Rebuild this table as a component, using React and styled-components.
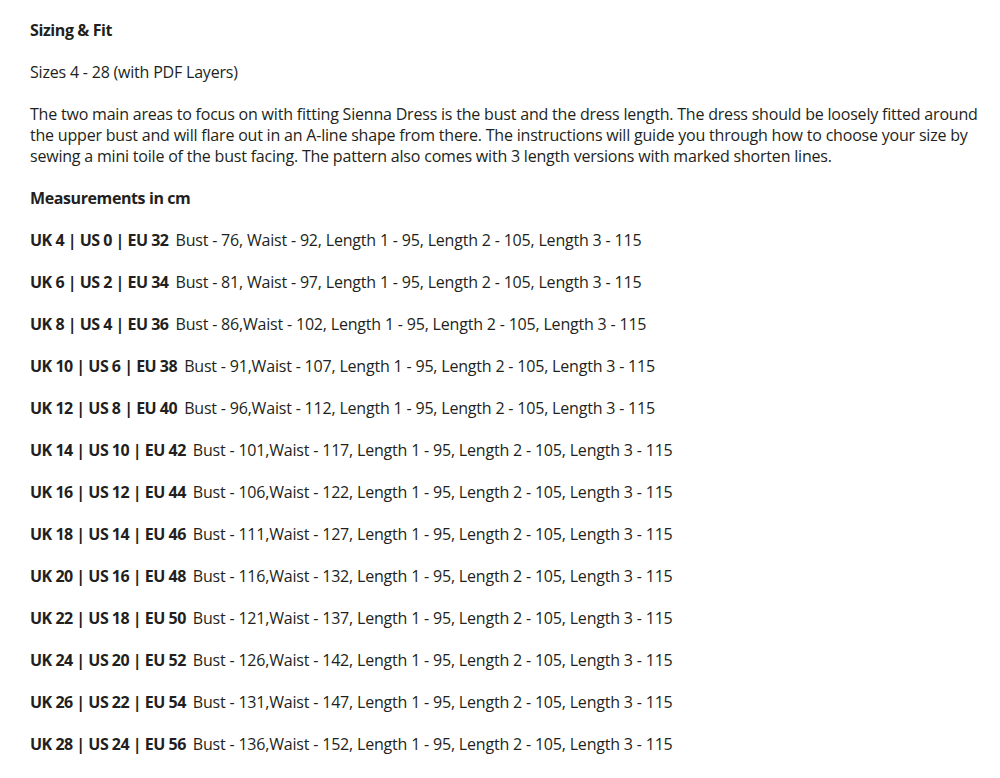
import React from 'react';
import styled, { createGlobalStyle } from 'styled-components';

const GlobalStyle = createGlobalStyle`
  body {
    margin: 0;
    background: #ffffff;
  }
`;

const Page = styled.div`
  padding: 19.5px 30px 0;
  font-family: 'Open Sans', 'Liberation Sans', sans-serif;
  font-size: 16px;
  line-height: 21px;
  color: #231f20;
  letter-spacing: -0.2px;
`;

const Heading = styled.h3`
  margin: 0 0 21px;
  font-size: inherit;
  line-height: inherit;
  font-weight: 700;
  letter-spacing: -0.4px;
`;

const Para = styled.p`
  margin: 0 0 21px;
  white-space: nowrap;
`;

const SizeRow = styled.p`
  margin: 0 0 21px;
  white-space: nowrap;
  letter-spacing: -0.19px;

  strong {
    font-weight: 700;
    letter-spacing: -0.5px;
    margin-right: 7px;
  }
`;

const sizes = [
  ['UK 4 | US 0 | EU 32', 'Bust - 76, Waist - 92'],
  ['UK 6 | US 2 | EU 34', 'Bust - 81, Waist - 97'],
  ['UK 8 | US 4 | EU 36', 'Bust - 86,Waist - 102'],
  ['UK 10 | US 6 | EU 38', 'Bust - 91,Waist - 107'],
  ['UK 12 | US 8 | EU 40', 'Bust - 96,Waist - 112'],
  ['UK 14 | US 10 | EU 42', 'Bust - 101,Waist - 117'],
  ['UK 16 | US 12 | EU 44', 'Bust - 106,Waist - 122'],
  ['UK 18 | US 14 | EU 46', 'Bust - 111,Waist - 127'],
  ['UK 20 | US 16 | EU 48', 'Bust - 116,Waist - 132'],
  ['UK 22 | US 18 | EU 50', 'Bust - 121,Waist - 137'],
  ['UK 24 | US 20 | EU 52', 'Bust - 126,Waist - 142'],
  ['UK 26 | US 22 | EU 54', 'Bust - 131,Waist - 147'],
  ['UK 28 | US 24 | EU 56', 'Bust - 136,Waist - 152'],
];

const lengths = 'Length 1 - 95, Length 2 - 105, Length 3 - 115';

export default function App() {
  return (
    <>
      <GlobalStyle />
      <Page>
        <Heading>Sizing &amp; Fit</Heading>
        <Para>Sizes 4 - 28 (with PDF Layers)</Para>
        <Para>
          The two main areas to focus on with fitting Sienna Dress is the bust and the dress length. The dress should be loosely fitted around
          <br />
          the upper bust and will flare out in an A-line shape from there. The instructions will guide you through how to choose your size by
          <br />
          sewing a mini toile of the bust facing. The pattern also comes with 3 length versions with marked shorten lines.
        </Para>
        <Heading>Measurements in cm</Heading>
        {sizes.map(([label, body]) => (
          <SizeRow key={label}>
            <strong>{label}</strong>
            {body}, {lengths}
          </SizeRow>
        ))}
      </Page>
    </>
  );
}
